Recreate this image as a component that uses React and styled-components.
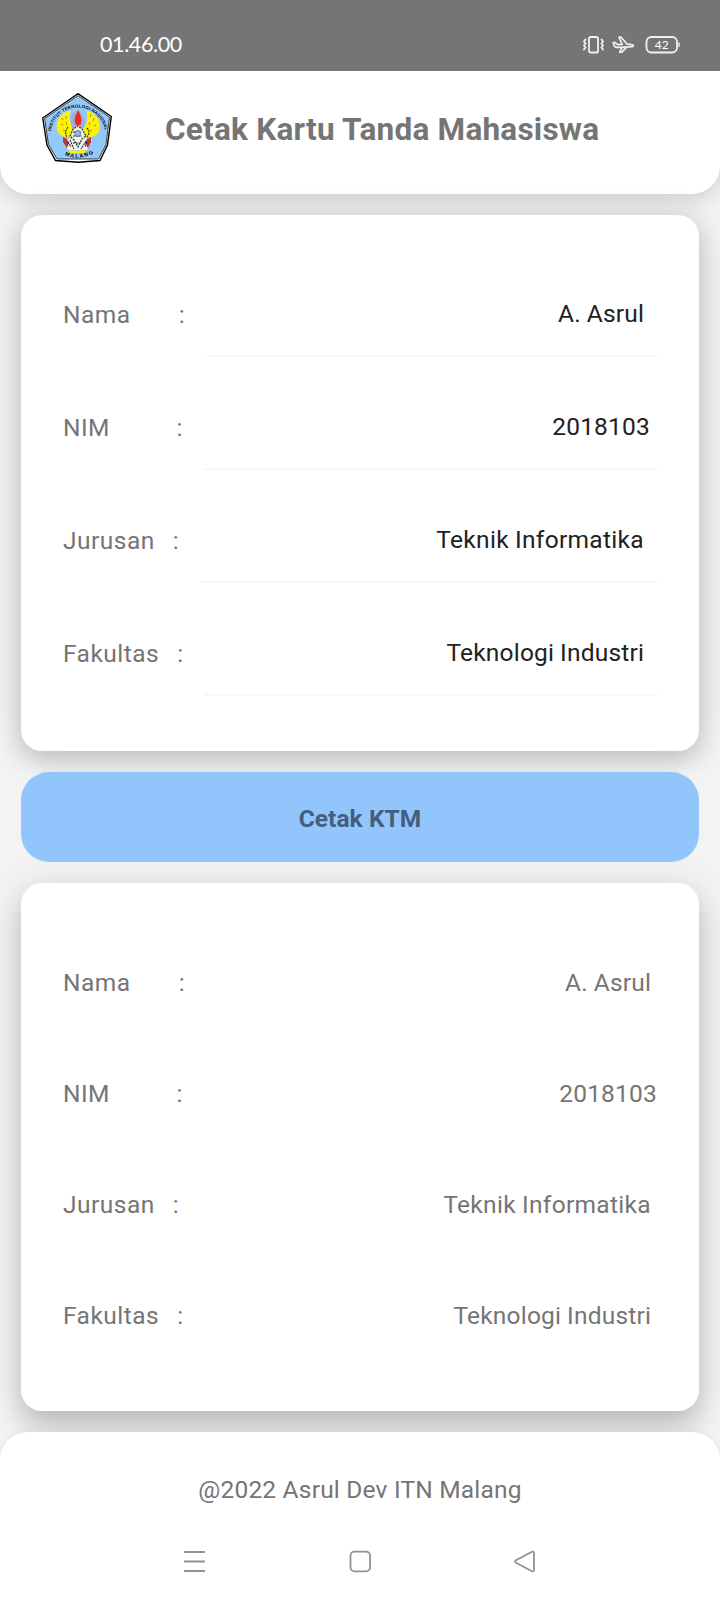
import React from "react";
import styled, { createGlobalStyle } from "styled-components";

const GlobalStyle = createGlobalStyle`
  * { box-sizing: border-box; }
  body { margin: 0; background: #f2f2f2; }
`;

const Screen = styled.main`
  display: flex;
  flex-direction: column;
  width: 720px;
  height: 1600px;
  overflow: hidden;
  background: #f3f3f3;
  color: #757575;
  font-family: Roboto, "Liberation Sans", sans-serif;
  font-size: 24.5px;
  line-height: 29px;
  letter-spacing: 0.2px;
`;

const StatusBar = styled.div`
  position: relative;
  z-index: 1;
  display: flex;
  justify-content: space-between;
  align-items: center;
  flex: none;
  height: 71px;
  padding: 18px 40px 0 100px;
  background: #757575;
  color: #fff;
`;

const Clock = styled.span`
  padding-bottom: 2px;
  font-family: Lato, sans-serif;
  font-size: 21.5px;
  line-height: 26px;
  letter-spacing: -0.4px;
`;

const StatusIcons = styled.svg`
  display: block;
  width: 98px;
  height: 20px;
  overflow: visible;
`;

const Header = styled.header`
  display: flex;
  align-items: flex-start;
  flex: none;
  height: 123px;
  padding: 22px 42px 0;
  background: #fff;
  border-radius: 0 0 28px 28px;
  box-shadow: 0 0 26px rgba(0, 0, 0, 0.07), 0 6px 22px rgba(0, 0, 0, 0.1);
`;

const Logo = styled.svg`
  display: block;
  flex: none;
  width: 70px;
  height: 70px;
`;

const Title = styled.h1`
  flex: 1;
  margin: 18px 0 0;
  padding-left: 53px;
  font-size: 31.5px;
  line-height: 38px;
  font-weight: 700;
  letter-spacing: 0.23px;
  white-space: nowrap;
`;

const Content = styled.div`
  display: flex;
  flex-direction: column;
  flex: none;
  gap: 21px;
  padding: 21px;
`;

const Card = styled.section`
  padding: 42px;
  background: #fff;
  border-radius: 21px;
  box-shadow: 0 0 36px rgba(0, 0, 0, 0.09),
    0 ${(p) => p.$drop}px ${(p) => p.$blur}px rgba(0, 0, 0, 0.18);
`;

const Row = styled.div`
  display: flex;
  align-items: center;
  height: ${(p) => p.$height}px;
  white-space: pre;
`;

const Label = styled.span`
  padding-top: ${(p) => p.$offset}px;
  letter-spacing: 0.48px;
  word-spacing: -0.52px;
`;

const Value = styled.span`
  flex: 1;
  padding-top: 3px;
  text-align: right;
  letter-spacing: ${(p) => p.$tracking}px;
  word-spacing: -0.4px;
`;

const Field = styled.div`
  flex: 1;
  height: 87px;
  margin-left: 21px;
  padding: 29px 7px 0 0;
  border-bottom: 2px solid #f7f7f7;
  color: #212121;
  text-align: right;
  letter-spacing: ${(p) => p.$tracking}px;
  word-spacing: -0.4px;
`;

const PrintButton = styled.button`
  position: relative;
  height: 90px;
  padding: 3px 0 0;
  border: 0;
  border-radius: 28px;
  background: #93c5fd;
  color: #445f7d;
  font: 700 24.5px/29px Roboto, sans-serif;
  letter-spacing: 0.05px;
`;

const Footer = styled.footer`
  display: flex;
  flex-direction: column;
  align-items: center;
  flex: 1;
  padding-top: 43px;
  background: #fff;
  border-radius: 28px 28px 0 0;
  box-shadow: 0 0 10px rgba(0, 0, 0, 0.05);
`;

const NavBar = styled.nav`
  display: flex;
  justify-content: space-between;
  width: 353px;
  margin: 46px 1px 0 0;
`;

const NavIcon = styled.svg`
  display: block;
  width: 23px;
  height: 23px;
  fill: none;
  stroke: #929292;
  stroke-width: 1.8;
  stroke-linejoin: round;
`;

const student = [
  { label: "Nama        :", value: "A. Asrul ", tracking: 0.2 },
  { label: "NIM           :", value: "2018103", tracking: 0.2 },
  { label: "Jurusan   :", value: "Teknik Informatika ", tracking: 0.32 },
  { label: "Fakultas   :", value: "Teknologi Industri ", tracking: 0.2 },
];

function Emblem() {
  return (
    <Logo viewBox="0 0 70 70">
      <path d="M36 .7 69.300 23.500 65.500 52 58 67.500 36 69.300 13.500 67.500 5 52 .7 25Z" fill="#fff" stroke="#000" strokeWidth="1.400" />
      <path d="M36 2.700 67.500 24 64 51.500 56.500 66H15L6.500 51.500 2.600 25.500Z" fill="#93c9f9" stroke="#111" strokeWidth=".8" />
      <path d="M29 17.500C18 19 12.500 30 15.500 38q3 7 12.500 6.500h16Q54 45 57.300 38c2.500-9-3-18.500-13.300-20.500 3 8 1 14-3 18h-9c-5-5-5-12-3-18Z" fill="#fff200" />
      <path d="m20 25 1 2m3-4v3m-5 5 2 1m3-3 1 3m-4 5 2 1m26-17-1 3m4 1-1 3m3 4-2 1m-4-4-1 3m3 5-2 1" stroke="#8b8420" strokeWidth=".9" />
      <path d="M30 21q-3 9 1 15h10q4-8-1-15l-4-4Z" fill="#9eafd7" />
      <path d="M36.200 17c-3 6-5 10-2.200 15h4.500c2.500-6-.3-10-2.300-15Z" fill="#f02a26" />
      <path d="M22 46 26 57h19l5-11-6 0-4-11-4-2-4 2-4 11Z" fill="#f3f3f0" />
      <path d="m21 44 4 2 2 4-2 5-4-6Zm28 0-4 2-2 4 3 5 3-6Z" fill="#b8383a" />
      <path d="m28 43 3-7 5-3 4 3 4 7-4 3-4 8-4-7Z" fill="none" stroke="#263c4c" strokeWidth="1.300" strokeDasharray="2 1" />
      <path d="M26 34q-4 5-1 10m20-9q4 4 0 9M28 47l4 9m12-8-5 8m-8-17h8m-8 4h9m-9 7h8m-13-1 3 5m16-5-2 5" fill="none" stroke="#222" strokeWidth="1.100" strokeDasharray="2 .8" />
      <circle cx="35.700" cy="40.500" r="3" fill="#8dbbe0" stroke="#555" strokeWidth=".7" />
      <path d="M27 56.500q9 2.500 17 0l-1 3.500H28Z" fill="#fff200" />
      <defs>
        <path id="arcTop" d="M9 38C10.500 25 23 14.500 36 14.500S61.500 25 63 38" />
        <path id="arcBottom" d="M20 60.500Q36 69.500 53 59.500" />
      </defs>
      <g fill="#000" fontFamily="Liberation Sans, sans-serif" fontWeight="700">
        <text fontSize="4.500" letterSpacing="0"><textPath href="#arcTop" textLength="77">INSTITUT TEKNOLOGI NASIONAL</textPath></text>
        <text fontSize="5.400" letterSpacing="0"><textPath href="#arcBottom" startOffset="3" textLength="30">MALANG</textPath></text>
      </g>
    </Logo>
  );
}

function SystemIcons() {
  return (
    <StatusIcons viewBox="0 0 98 20" fill="none" stroke="#f1f1f1" strokeWidth="1.800" strokeLinejoin="round" strokeLinecap="round">
      <rect x="7" y="2" width="9" height="15.500" rx="1.600" />
      <path d="m3.500 4.500-1.500 2 1.500 2-1.500 2 1.500 2-1.500 2M19.500 4.500l1.500 2-1.500 2 1.500 2-1.500 2 1.500 2" strokeWidth="1.900" />
      <path d="M31.200 7.500l2 .2 2.500 2 4.500-.2-3.200-7.300h2.200l6 7 5.300.6q1.800.8 0 1.800l-11.300.8h-5.500Q31.700 11 31.200 7.500Zm8.800 5.200-2.300 4.500h2.200l4.600-4.700" strokeWidth="1.700" />
      <rect x="64.500" y="2" width="30.500" height="15.500" rx="5" />
      <path d="M97 8v3.500" strokeWidth="1.400" />
      <text x="79.700" y="13.900" textAnchor="middle" fill="#fff" stroke="none" fontFamily="Lato, sans-serif" fontSize="12" letterSpacing="0">42</text>
    </StatusIcons>
  );
}

export default function App() {
  return (
    <Screen>
      <GlobalStyle />
      <StatusBar>
        <Clock>01.46.00</Clock>
        <SystemIcons />
      </StatusBar>
      <Header>
        <Emblem />
        <Title>Cetak Kartu Tanda Mahasiswa</Title>
      </Header>
      <Content>
        <Card $drop={9} $blur={26}>
          {student.map((item) => (
            <Row key={item.label} $height={113}>
              <Label $offset={2}>{item.label}</Label>
              <Field $tracking={item.tracking}>{item.value}</Field>
            </Row>
          ))}
        </Card>
        <PrintButton>Cetak KTM</PrintButton>
        <Card $drop={18} $blur={28}>
          {student.map((item) => (
            <Row key={item.label} $height={111}>
              <Label $offset={3}>{item.label}</Label>
              <Value $tracking={item.tracking}>{item.value}</Value>
            </Row>
          ))}
        </Card>
      </Content>
      <Footer>
        <span>@2022 Asrul Dev ITN Malang</span>
        <NavBar>
          <NavIcon viewBox="0 0 23 23"><path d="M1 2h21M1 11.500h21M1 21h21" /></NavIcon>
          <NavIcon viewBox="0 0 23 23"><rect x="2.500" y="1.700" width="19.600" height="19.600" rx="4" /></NavIcon>
          <NavIcon viewBox="0 0 23 23"><path d="M2.500 10.500 18.500 2q2.500-1 2.500 1.500v16q0 2.500-2.500 1.500L2.500 12.500q-1-1 0-2Z" /></NavIcon>
        </NavBar>
      </Footer>
    </Screen>
  );
}
